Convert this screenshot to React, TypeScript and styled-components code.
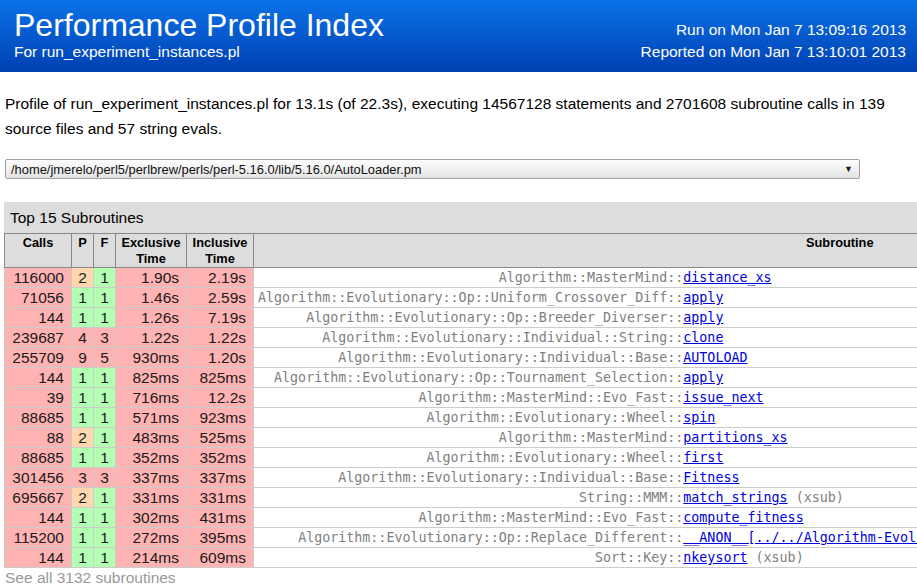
import React from "react";
import styled, { createGlobalStyle } from "styled-components";

const Global = createGlobalStyle`
  html, body { margin: 0; padding: 0; overflow: hidden; background: #fff; }
  body { font-family: "Liberation Sans", Arial, sans-serif; color: #000; }
`;

const Header = styled.header`
  display: flex;
  justify-content: space-between;
  align-items: flex-start;
  height: 72px;
  padding: 0 11px 0 14px;
  box-sizing: border-box;
  background: linear-gradient(#0b72e7, #0040b2);
  color: #fff;
`;

const HeadLeft = styled.div`
  display: flex;
  flex-direction: column;
  padding-top: 7px;
`;

const Title = styled.h1`
  margin: 0;
  font-size: 32px;
  line-height: 36px;
  font-weight: normal;
`;

const Subtitle = styled.div`
  font-size: 15.5px;
  line-height: 18px;
`;

const HeadRight = styled.div`
  display: flex;
  flex-direction: column;
  align-items: flex-end;
  padding-top: 19px;
  font-size: 15.5px;
  line-height: 22px;
`;

const Body = styled.main`
  padding: 0 4px;
`;

const Intro = styled.p`
  margin: 19px 0 0 1px;
  font-size: 15.5px;
  line-height: 25px;
  max-width: 905px;
`;

const Select = styled.div`
  display: flex;
  align-items: center;
  justify-content: space-between;
  box-sizing: border-box;
  width: 855px;
  height: 20px;
  margin: 18px 0 0 1px;
  padding: 0 6px 0 5px;
  border: 1px solid #a0a0a0;
  border-radius: 2px;
  background: linear-gradient(#fdfdfd, #e4e4e4);
  font-size: 12.9px;
  color: #111;
`;

const Arrow = styled.span`
  font-size: 9px;
  color: #222;
`;

const Table = styled.table`
  margin-top: 23px;
  border-collapse: collapse;
  white-space: nowrap;
  width: max-content;
`;

const Caption = styled.caption`
  text-align: left;
  background: #dddddd;
  height: 32px;
  line-height: 31px;
  padding-left: 6px;
  font-size: 15.5px;
  border-bottom: 1px solid #888;
  box-sizing: border-box;
`;

const Th = styled.th<{ $w?: number }>`
  background: #dddddd;
  border: 1px solid #888;
  border-top: none;
  padding: 1px 0 0;
  font-size: 12.8px;
  line-height: 16px;
  height: 32px;
  vertical-align: top;
  text-align: center;
  box-sizing: border-box;
  ${(p) => (p.$w ? `width: ${p.$w}px; min-width: ${p.$w}px;` : "")}
`;

const tone = {
  pink: "#ffb3b3",
  orange: "#ffd8b0",
  green: "#b3ffb3",
};

const Num = styled.td<{ $tone: keyof typeof tone; $center?: boolean }>`
  background: ${(p) => tone[p.$tone]};
  border: 1px solid #cccccc;
  padding: 0 ${(p) => (p.$center ? "0" : "7px")} 0 0;
  text-align: ${(p) => (p.$center ? "center" : "right")};
  font-size: 15.5px;
  line-height: 19px;
  color: #1a1a1a;
`;

const Pkg = styled.td`
  border: 1px solid #cccccc;
  border-right: none;
  padding: 0 0 0 4px;
  text-align: right;
  font-family: "DejaVu Sans Mono", monospace;
  font-size: 13.33px;
  line-height: 19px;
  color: #808080;
`;

const Sub = styled.td`
  border: 1px solid #cccccc;
  border-left: none;
  padding: 0 4px 0 0;
  text-align: left;
  font-family: "DejaVu Sans Mono", monospace;
  font-size: 13.33px;
  line-height: 19px;
  color: #808080;
`;

const SubLink = styled.a`
  color: #0000dd;
  text-decoration: underline;
`;

const More = styled.div`
  font-size: 15.5px;
  line-height: 20px;
  color: #999;
  padding-left: 1px;
`;

type Row = {
  calls: string;
  p: string;
  f: string;
  pt: keyof typeof tone;
  ft: keyof typeof tone;
  excl: string;
  incl: string;
  pkg: string;
  sub: string;
  xsub?: boolean;
};

const rows: Row[] = [
  { calls: "116000", p: "2", f: "1", pt: "orange", ft: "green", excl: "1.90s", incl: "2.19s", pkg: "Algorithm::MasterMind::", sub: "distance_xs" },
  { calls: "71056", p: "1", f: "1", pt: "green", ft: "green", excl: "1.46s", incl: "2.59s", pkg: "Algorithm::Evolutionary::Op::Uniform_Crossover_Diff::", sub: "apply" },
  { calls: "144", p: "1", f: "1", pt: "green", ft: "green", excl: "1.26s", incl: "7.19s", pkg: "Algorithm::Evolutionary::Op::Breeder_Diverser::", sub: "apply" },
  { calls: "239687", p: "4", f: "3", pt: "pink", ft: "pink", excl: "1.22s", incl: "1.22s", pkg: "Algorithm::Evolutionary::Individual::String::", sub: "clone" },
  { calls: "255709", p: "9", f: "5", pt: "pink", ft: "pink", excl: "930ms", incl: "1.20s", pkg: "Algorithm::Evolutionary::Individual::Base::", sub: "AUTOLOAD" },
  { calls: "144", p: "1", f: "1", pt: "green", ft: "green", excl: "825ms", incl: "825ms", pkg: "Algorithm::Evolutionary::Op::Tournament_Selection::", sub: "apply" },
  { calls: "39", p: "1", f: "1", pt: "green", ft: "green", excl: "716ms", incl: "12.2s", pkg: "Algorithm::MasterMind::Evo_Fast::", sub: "issue_next" },
  { calls: "88685", p: "1", f: "1", pt: "green", ft: "green", excl: "571ms", incl: "923ms", pkg: "Algorithm::Evolutionary::Wheel::", sub: "spin" },
  { calls: "88", p: "2", f: "1", pt: "orange", ft: "green", excl: "483ms", incl: "525ms", pkg: "Algorithm::MasterMind::", sub: "partitions_xs" },
  { calls: "88685", p: "1", f: "1", pt: "green", ft: "green", excl: "352ms", incl: "352ms", pkg: "Algorithm::Evolutionary::Wheel::", sub: "first" },
  { calls: "301456", p: "3", f: "3", pt: "pink", ft: "pink", excl: "337ms", incl: "337ms", pkg: "Algorithm::Evolutionary::Individual::Base::", sub: "Fitness" },
  { calls: "695667", p: "2", f: "1", pt: "orange", ft: "green", excl: "331ms", incl: "331ms", pkg: "String::MMM::", sub: "match_strings", xsub: true },
  { calls: "144", p: "1", f: "1", pt: "green", ft: "green", excl: "302ms", incl: "431ms", pkg: "Algorithm::MasterMind::Evo_Fast::", sub: "compute_fitness" },
  { calls: "115200", p: "1", f: "1", pt: "green", ft: "green", excl: "272ms", incl: "395ms", pkg: "Algorithm::Evolutionary::Op::Replace_Different::", sub: "__ANON__[../../Algorithm-Evolutionary/lib/Algorithm/Evolutionary/Op/Replace_Different.pm:89]" },
  { calls: "144", p: "1", f: "1", pt: "green", ft: "green", excl: "214ms", incl: "609ms", pkg: "Sort::Key::", sub: "nkeysort", xsub: true },
];

export default function App() {
  return (
    <>
      <Global />
      <Header>
        <HeadLeft>
          <Title>Performance Profile Index</Title>
          <Subtitle>For run_experiment_instances.pl</Subtitle>
        </HeadLeft>
        <HeadRight>
          <span>Run on Mon Jan 7 13:09:16 2013</span>
          <span>Reported on Mon Jan 7 13:10:01 2013</span>
        </HeadRight>
      </Header>
      <Body>
        <Intro>
          Profile of run_experiment_instances.pl for 13.1s (of 22.3s), executing 14567128 statements and 2701608
          subroutine calls in 139 source files and 57 string evals.
        </Intro>
        <Select>
          <span>/home/jmerelo/perl5/perlbrew/perls/perl-5.16.0/lib/5.16.0/AutoLoader.pm</span>
          <Arrow>▼</Arrow>
        </Select>
        <Table>
          <Caption>Top 15 Subroutines</Caption>
          <thead>
            <tr>
              <Th $w={67}>Calls</Th>
              <Th $w={22}>P</Th>
              <Th $w={22}>F</Th>
              <Th $w={71}>
                Exclusive
                <br />
                Time
              </Th>
              <Th $w={67}>
                Inclusive
                <br />
                Time
              </Th>
              <Th colSpan={2}>Subroutine</Th>
            </tr>
          </thead>
          <tbody>
            {rows.map((r, i) => (
              <tr key={i}>
                <Num $tone="pink">{r.calls}</Num>
                <Num $tone={r.pt} $center>
                  {r.p}
                </Num>
                <Num $tone={r.ft} $center>
                  {r.f}
                </Num>
                <Num $tone="pink">{r.excl}</Num>
                <Num $tone="pink">{r.incl}</Num>
                <Pkg>{r.pkg}</Pkg>
                <Sub>
                  <SubLink href="#">{r.sub}</SubLink>
                  {r.xsub ? " (xsub)" : ""}
                </Sub>
              </tr>
            ))}
          </tbody>
        </Table>
        <More>See all 3132 subroutines</More>
      </Body>
    </>
  );
}
